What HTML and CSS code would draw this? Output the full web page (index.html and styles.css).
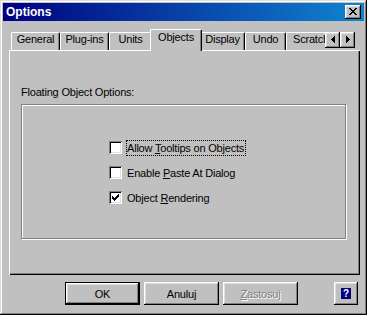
FILE: index.html
```html
<!DOCTYPE html>
<html lang="pl">
<head>
  <meta charset="UTF-8">
  <title>Options</title>
  <link rel="stylesheet" href="styles.css">
</head>
<body>

<div class="window">
  <div class="titlebar">
    <span class="title">Options</span>
    <div class="btn close">
      <svg width="8" height="7" viewBox="0 0 8 7" shape-rendering="crispEdges">
        <path d="M0 0h2v1h-2z M6 0h2v1h-2z M1 1h2v1h-2z M5 1h2v1h-2z M2 2h4v1h-4z M3 3h2v1h-2z M2 4h4v1h-4z M1 5h2v1h-2z M5 5h2v1h-2z M0 6h2v1h-2z M6 6h2v1h-2z" fill="#000"/>
      </svg>
    </div>
  </div>

  <div class="tab-strip">
    <div class="tab-list">
      <div class="tab" style="width:49px">General</div>
      <div class="tab" style="width:49px">Plug-ins</div>
      <div class="tab" style="width:43px">Units</div>
      <div class="tab active" style="width:52px">Objects</div>
      <div class="tab" style="width:45px">Display</div>
      <div class="tab" style="width:41px">Undo</div>
      <div class="tab tab-left" style="width:60px">Scratch</div>
    </div>
    <div class="tab-scroll">
      <div class="btn spin">
        <svg width="4" height="7" viewBox="0 0 4 7" shape-rendering="crispEdges"><path d="M3 0h1v7h-1z M2 1h1v5h-1z M1 2h1v3h-1z M0 3h1v1h-1z" fill="#000"/></svg>
      </div>
      <div class="btn spin">
        <svg width="4" height="7" viewBox="0 0 4 7" shape-rendering="crispEdges"><path d="M0 0h1v7h-1z M1 1h1v5h-1z M2 2h1v3h-1z M3 3h1v1h-1z" fill="#000"/></svg>
      </div>
    </div>
  </div>

  <div class="panel">
    <div class="group-label">Floating Object Options:</div>
    <div class="group">
      <div class="check">
        <span class="box"></span>
        <span class="check-text focus">Allow <u>T</u>ooltips on Objects</span>
      </div>
      <div class="check">
        <span class="box"></span>
        <span class="check-text">Enable <u>P</u>aste At Dialog</span>
      </div>
      <div class="check">
        <span class="box">
          <svg width="7" height="7" viewBox="0 0 7 7" shape-rendering="crispEdges">
            <path d="M0 2h1v3h-1z M1 3h1v3h-1z M2 4h1v3h-1z M3 3h1v3h-1z M4 2h1v3h-1z M5 1h1v3h-1z M6 0h1v3h-1z" fill="#000"/>
          </svg>
        </span>
        <span class="check-text">Object <u>R</u>endering</span>
      </div>
    </div>
  </div>

  <div class="actions">
    <div class="btn push default">OK</div>
    <div class="btn push">Anuluj</div>
    <div class="btn push disabled"><u>Z</u>astosuj</div>
    <div class="btn help"><span class="help-icon">?</span></div>
  </div>
</div>

</body>
</html>
```

FILE: styles.css
```css
body { margin:0; background:#c0c0c0; font-family:"Liberation Sans", Arial, sans-serif; font-size:11px; letter-spacing:-0.2px; color:#000; }
u { text-decoration:underline; text-underline-offset:1px; }

/* window frame */
.window { width:367px; height:315px; box-sizing:border-box; padding:3px; background:#c0c0c0;
  box-shadow: inset -1px -1px #000, inset 1px 1px #dfdfdf, inset -2px -2px #808080, inset 2px 2px #fff; }
.titlebar { height:18px; display:flex; align-items:center; justify-content:space-between; padding:0 3px 0 3px;
  background:linear-gradient(to right, #000080, #1084d0); }
.title { color:#fff; font-weight:bold; font-size:12px; letter-spacing:0; }

/* 3d buttons */
.btn { box-sizing:border-box; background:#c0c0c0; display:flex; align-items:center; justify-content:center;
  box-shadow: inset -1px -1px #000, inset 1px 1px #fff, inset -2px -2px #808080, inset 2px 2px #dfdfdf; }
.close { width:16px; height:14px; padding:0 1px 1px 0; }

/* tabs */
.tab-strip { display:flex; margin:8px 0 -1px 6px; height:22px; position:relative; z-index:1; }
.tab-list { display:flex; align-items:flex-end; width:316px; height:22px; box-sizing:border-box; padding-left:2px; overflow:hidden; }
.tab { flex-shrink:0; box-sizing:border-box; height:18px; margin-bottom:1px; line-height:13px; text-align:center; white-space:nowrap;
  border-top:1px solid #fff; border-left:1px solid #fff; border-right:1px solid #000; border-radius:2px 2px 0 0;
  box-shadow: inset -1px 0 #808080; background:#c0c0c0; }
.tab.active { height:22px; margin:0 -2px; padding-top:1px; position:relative; z-index:2; }
.tab-left { text-align:left; padding-left:6px; }
.tab-scroll { display:flex; margin-top:3px; }
.spin { width:15px; height:16px; padding-bottom:1px; }

/* page panel */
.panel { width:351px; height:225px; box-sizing:border-box; margin-left:6px; padding:36px 0 0 12px;
  box-shadow: inset 1px 1px #fff, inset -1px -1px #000, inset -2px -2px #808080; }
.group-label { line-height:13px; }
.group { width:325px; height:135px; box-sizing:border-box; margin-top:5px; padding:30px 0 0 87px;
  border:1px solid #808080; box-shadow: inset 1px 1px #fff, 1px 1px #fff; }
.check { display:flex; align-items:center; height:25px; gap:4px; }
.box { width:13px; height:13px; box-sizing:border-box; background:#fff; display:flex; align-items:center; justify-content:center;
  box-shadow: inset 1px 1px #808080, inset -1px -1px #fff, inset 2px 2px #000, inset -2px -2px #dfdfdf; }
.check-text { line-height:14px; border:1px dotted transparent; padding-right:1px; }
.check-text.focus { border-color:#000; }

/* bottom buttons */
.actions { display:flex; margin-top:7px; padding:0 6px 0 62px; }
.push { width:75px; height:23px; margin-right:4px; }
.push.default { border:1px solid #000; }
.push.disabled { color:#808080; text-shadow:1px 1px #fff; }
.help { width:24px; height:23px; margin-left:auto; }
.help-icon { width:10px; height:11px; background:#000080; color:#fff; font-weight:bold; font-size:10px; line-height:11px; text-align:center; letter-spacing:0; }
```
